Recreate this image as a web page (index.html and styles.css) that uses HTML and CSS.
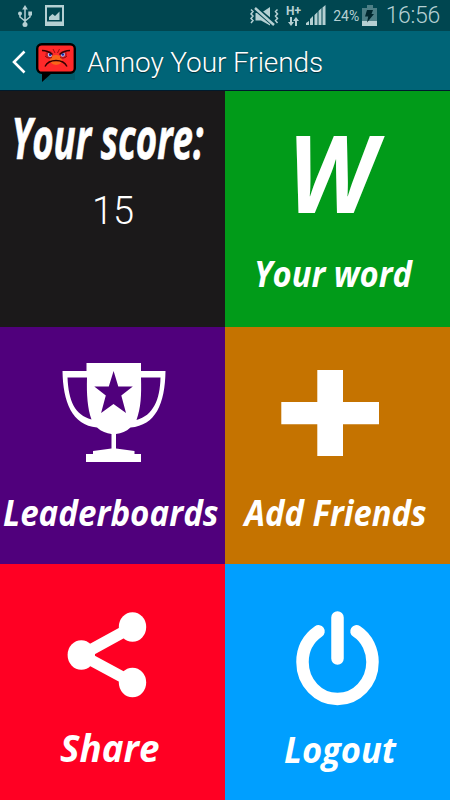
FILE: index.html
```html
<!DOCTYPE html>
<html lang="en">
<head>
<meta charset="utf-8">
<title>Annoy Your Friends</title>
<link rel="stylesheet" href="styles.css">
</head>
<body>
<div class="status">
  <svg class="usb" width="14" height="23" viewBox="0 0 14 23">
    <path d="M7 3v17M2 9v3l5 4 5-4V9" fill="none" stroke="currentColor" stroke-width="1.5"/>
    <path d="M4.200 4.500 7 0l2.800 4.500z"/><circle cx="7" cy="19.500" r="2.500"/><circle cx="2" cy="8.500" r="2"/><path d="M10.300 6.500H14v4h-3.700z"/>
  </svg>
  <svg class="photo" width="19" height="21" viewBox="0 0 19 21">
    <path d="M0 0h19v21H0zM2 2.500v14h15v-14z" fill-rule="evenodd"/>
    <path d="M4 15v-3l3.500-3 2.500 2 4.500-4.500V15z"/>
  </svg>
  <svg class="mute" width="29" height="20" viewBox="0 0 29 20">
    <path d="M5.500 6H11l9-6v18.500l-9-5H5.500z"/>
    <path d="M5 1l20 17" stroke="#004650" stroke-width="5"/>
    <path d="M5 1l19 17" stroke="currentColor" stroke-width="2.400"/>
    <path d="M1 2.500l2 2-2 2.500 2 2-2 2.500 2 2-2 2.500M27.500 2.500l-2 2 2 2.500-2 2 2 2.500-2 2 2 2.500" fill="none" stroke="currentColor" stroke-width="1.500"/>
  </svg>
  <div class="network">
    <span class="hplus">H+</span>
    <svg width="11" height="9" viewBox="0 0 11 9"><path d="M2 0h2v5h2L3 9 0 5h2zM7 9h2V4h2L8 0 5 4h2z"/></svg>
  </div>
  <svg class="signal" width="20" height="20" viewBox="0 0 20 20">
    <path d="M0 20v-2l3-2v4zM4 20v-6l3-3v9zM8.500 20V10l3-3v13zM12.500 20V6l3-3v17zM16.500 20V2.500L19.500 0v20z"/>
  </svg>
  <span class="percent">24%</span>
  <svg class="battery" width="15" height="21" viewBox="0 0 15 21">
    <path d="M5 0h6v3h4v18H0V3h5z" fill="#4d7f86"/><path d="M0 16h15v5H0z"/>
    <path d="M5 5h6L9.500 9H12L5 17.500l1.200-6H3z" fill="#00272e"/>
  </svg>
  <span class="clock">16:56</span>
</div>
<header class="bar">
  <svg class="back" width="14" height="24" viewBox="0 0 14 24"><path d="M12.500 1.500 2 12l10.500 10.500" fill="none" stroke="#fff" stroke-width="2.600"/></svg>
  <svg class="logo" width="40" height="39" viewBox="0 0 40 39">
    <path d="M5 29h34v8H10z" fill="#00515e" opacity=".5"/>
    <path d="M6 27v12l10-9z"/>
    <rect x="1.200" y="1.200" width="37.600" height="28.600" rx="4.500" fill="#ff2929" stroke="#000" stroke-width="2.400"/>
    <ellipse cx="20" cy="17" rx="6" ry="5" fill="#f96f16" opacity=".85"/>
    <circle cx="13" cy="11.500" r="3.500" fill="#c61b22"/><circle cx="27.500" cy="11.500" r="3.500" fill="#c61b22"/>
    <circle cx="14" cy="11.700" r="2.200" fill="#b9c7ef"/><circle cx="26.800" cy="11.500" r="2.200" fill="#b9c7ef"/>
    <circle cx="14.200" cy="11.700" r="1.300" fill="#1528a8"/><circle cx="26.800" cy="11.500" r="1.300" fill="#1528a8"/>
    <path d="M6 7.500c4 0 7 1 10.500 4M34 7.500c-4 0-7 1-10.500 4" fill="none" stroke="#350000" stroke-width="1.500"/>
    <path d="M9 23.500c4-8 18-8 22 0" fill="none" stroke="#350000" stroke-width="1.400"/>
    <path d="M17 6l2 4M23.500 6l-2 4M9 13c2 2.500 5 2.500 7 1.500M31 13c-2 2.500-5 2.500-7 1.500" fill="none" stroke="#7d0909" stroke-width=".8"/>
  </svg>
  <h1 class="title">Annoy Your Friends</h1>
</header>
<main class="grid">
  <section class="tile score">
    <svg class="heading" viewBox="0 0 225 86"><text x="11.500" y="68.300" font-size="56.500" textLength="192" lengthAdjust="spacingAndGlyphs">Your score:</text></svg>
    <div class="value">15</div>
  </section>
  <section class="tile word">
    <svg class="art" viewBox="0 0 225 150"><text x="62.500" y="121.700" font-size="107" textLength="88" lengthAdjust="spacingAndGlyphs">W</text></svg>
    <svg class="label" viewBox="0 150 225 86"><text x="29" y="196.300" font-size="35.500" textLength="158" lengthAdjust="spacingAndGlyphs">Your word</text></svg>
  </section>
  <section class="tile leaders">
    <svg class="art" viewBox="0 0 225 150">
      <path d="M86.500 36h54.500v8h24.500c-.5 33-10 54.500-35 56.500-4.500 4-9 6-14.500 6.500V121.500l18.500 2.500v3h6.500v8H86v-8h7v-3l18.500-2.500V107c-5-.5-10-2.500-14.500-6.500C72 98 63 75 62.500 44h24zM67.500 50.500C68.500 74 75 88 91.500 92.500c-4-11-5-25-4.500-42zM160.500 50.500h-19.500c.5 18 0 30-4.500 42.500 16.500-4.500 23.500-20 24-42.500zM113.600 44l-4.800 15.500H94.300l11.500 9-4.700 17.500 12.400-9 12.500 9-4.700-17.500 11.500-9h-14.500z" fill-rule="evenodd"/>
    </svg>
    <svg class="label" viewBox="0 150 225 86"><text x="3" y="198.800" font-size="35.500" textLength="215.500" lengthAdjust="spacingAndGlyphs">Leaderboards</text></svg>
  </section>
  <section class="tile friends">
    <svg class="art" viewBox="0 0 225 150"><path d="M92.300 43H118v32h36v22.300h-36V129H92.300V97.300h-36V75h36z"/></svg>
    <svg class="label" viewBox="0 150 225 86"><text x="19.500" y="198.800" font-size="35.500" textLength="182" lengthAdjust="spacingAndGlyphs">Add Friends</text></svg>
  </section>
  <section class="tile share">
    <svg class="art" viewBox="0 0 225 150">
      <path d="M132.500 63 81.500 91l51 27.500" fill="none" stroke="#fff" stroke-width="11.500"/>
      <ellipse cx="132.500" cy="63" rx="13.700" ry="14.700"/><ellipse cx="81.300" cy="91" rx="13.700" ry="14.700"/><ellipse cx="132.500" cy="118.500" rx="13.700" ry="14.700"/>
    </svg>
    <svg class="label" viewBox="0 150 225 86"><text x="60" y="197.800" font-size="37" textLength="99.500" lengthAdjust="spacingAndGlyphs">Share</text></svg>
  </section>
  <section class="tile logout">
    <svg class="art" viewBox="0 0 225 150">
      <path d="M93.500 67.300C81 76 77.500 88.500 77.500 98c0 20.500 15.700 37 35 37s35-16.500 35-37c0-11-4.800-23.500-16-30.700M112.500 53.500v41" fill="none" stroke="#fff" stroke-width="12.500" stroke-linecap="round"/>
    </svg>
    <svg class="label" viewBox="0 150 225 86"><text x="59" y="199.200" font-size="35.500" textLength="112" lengthAdjust="spacingAndGlyphs">Logout</text></svg>
  </section>
</main>
</body>
</html>
```
FILE: styles.css
```css
* { box-sizing: border-box; }
body {
  width: 450px;
  height: 800px;
  margin: 0;
  display: flex;
  flex-direction: column;
  overflow: hidden;
  background: #000;
  font-family: Roboto, sans-serif;
}
svg { display: block; flex: none; fill: currentColor; overflow: visible; }
.status {
  height: 31px;
  display: flex;
  align-items: flex-start;
  padding: 5px 10px 0 18px;
  background: #004650;
  color: #b5d0d3;
}
.photo { margin-left: 13px; }
.mute { margin: 2px 0 0 186px; }
.network { width: 16px; margin-left: 7px; display: flex; flex-direction: column; align-items: center; }
.hplus { font: 700 12px/12px Roboto, sans-serif; }
.signal { margin-left: 5px; }
.percent { width: 28px; margin-left: 7px; font-size: 14px; line-height: 22px; white-space: nowrap; }
.battery { margin-left: 2px; }
.clock { margin-left: 9px; font-size: 23px; font-weight: 300; line-height: 22px; letter-spacing: -0.3px; white-space: nowrap; }
.bar {
  height: 60px;
  display: flex;
  padding: 12px 0 0 12px;
  background: #006477;
  border-bottom: 1px solid #001a2c;
}
.back { margin-top: 7px; }
.logo { margin-left: 10px; fill: #000; }
.title {
  margin: 0 0 0 11px;
  color: #fff;
  font-size: 28px;
  font-weight: 300;
  line-height: 39px;
  letter-spacing: -0.1px;
  white-space: nowrap;
  text-shadow: 0 1px 1px #002d36;
}
.grid {
  display: grid;
  grid-template-columns: 225px 225px;
  grid-template-rows: 236px 237px 236px;
}
.tile { display: flex; flex-direction: column; color: #fff; }
.art { width: 225px; height: 150px; }
.label, .heading { width: 225px; height: 86px; }
.tile text { font-family: "Open Sans", sans-serif; font-weight: 700; font-style: italic; }
.heading text { stroke: #fff; stroke-width: .7px; }
.score { background: #1b191a; }
.value { padding-left: 1px; text-align: center; font-size: 38px; font-weight: 300; line-height: 68px; }
.word { background: #019b19; }
.leaders { background: #50007c; }
.friends { background: #c57300; }
.share { background: #ff0023; }
.logout { background: #009fff; }
```
